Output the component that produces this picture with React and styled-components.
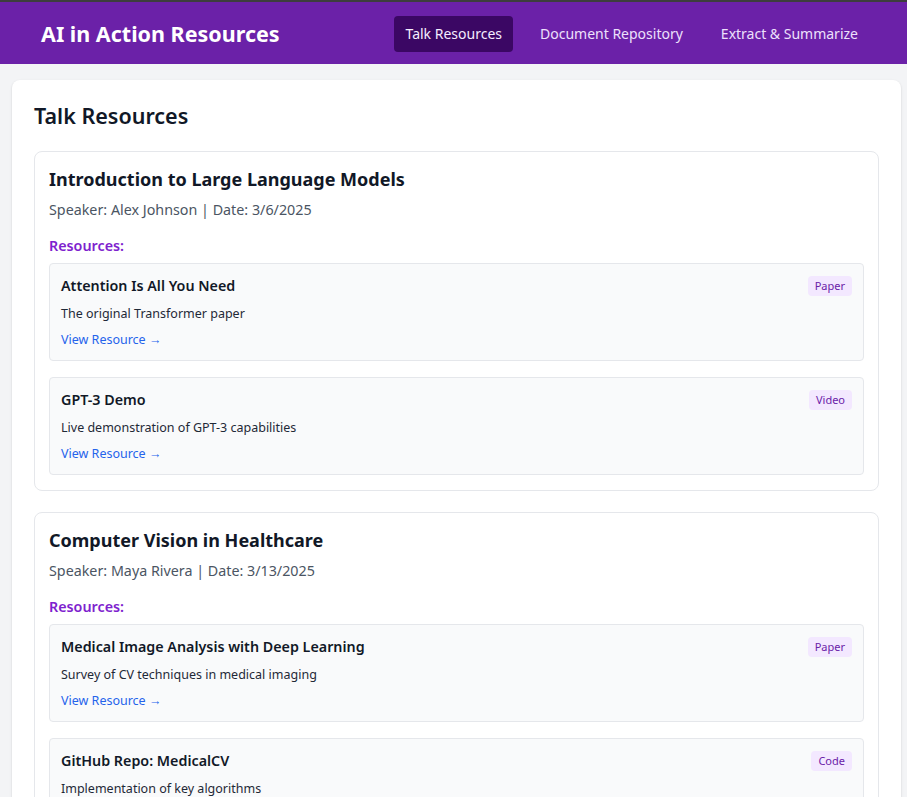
import React from 'react';
import styled, { createGlobalStyle } from 'styled-components';

const GlobalStyle = createGlobalStyle`
  html, body {
    margin: 0;
    padding: 0;
    background: #f3f4f6;
    font-family: "Noto Sans", "Liberation Sans", sans-serif;
    color: #111827;
  }
  * { box-sizing: border-box; }
`;

const Header = styled.header`
  display: flex;
  justify-content: space-between;
  align-items: center;
  height: 64px;
  padding: 1px 38px 0 41px;
  background: #6b21a8;
  border-top: 2px solid #3d3d3d;
`;

const Brand = styled.h1`
  margin: 0;
  font-size: 21.5px;
  font-weight: 700;
  color: #ffffff;
`;

const Nav = styled.nav`
  display: flex;
  gap: 16px;
`;

const NavButton = styled.button`
  border: none;
  border-radius: 4px;
  padding: 8px 11px;
  font-family: inherit;
  font-size: 14px;
  line-height: 20px;
  cursor: pointer;
  color: ${p => (p.$active ? '#f5edff' : '#ede0fc')};
  background: ${p => (p.$active ? '#3b0764' : 'transparent')};
`;

const Main = styled.main`
  padding: 16px 6px 0 12px;
`;

const Panel = styled.section`
  background: #ffffff;
  border-radius: 8px;
  box-shadow: 0 1px 3px rgba(0, 0, 0, 0.1), 0 1px 2px rgba(0, 0, 0, 0.06);
  padding: 20px 22px 22px;
`;

const PanelTitle = styled.h2`
  margin: 0 0 19px;
  font-size: 21.5px;
  line-height: 32px;
  font-weight: 600;
`;

const TalkCard = styled.article`
  border: 1px solid #e5e7eb;
  border-radius: 8px;
  padding: 13px 14px 15px;
  margin-bottom: 21px;
`;

const TalkTitle = styled.h3`
  margin: 0 0 5px;
  font-size: 18px;
  line-height: 28px;
  font-weight: 700;
`;

const Meta = styled.p`
  margin: 0 0 14px;
  font-size: 14.3px;
  line-height: 24px;
  color: #4b5563;
`;

const SectionLabel = styled.h4`
  margin: 0 0 7px;
  font-size: 14.3px;
  line-height: 20px;
  font-weight: 600;
  color: #7e22ce;
`;

const ResourceList = styled.div`
  display: flex;
  flex-direction: column;
  gap: 16px;
`;

const Resource = styled.div`
  background: #f9fafb;
  border: 1px solid #e5e7eb;
  border-radius: 4px;
  padding: 12px 11px 10px;
`;

const ResourceHead = styled.div`
  display: flex;
  justify-content: space-between;
  align-items: flex-start;
`;

const ResourceTitle = styled.h5`
  margin: 0;
  font-size: 14.3px;
  line-height: 20px;
  font-weight: 600;
`;

const Badge = styled.span`
  padding: 2px 7px;
  border-radius: 4px;
  font-size: 11px;
  line-height: 16px;
  background: #f3e8ff;
  color: #6b21a8;
`;

const Description = styled.p`
  margin: 8px 0 6px;
  font-size: 12.5px;
  line-height: 20px;
  color: #1f2937;
`;

const Link = styled.a`
  display: block;
  width: fit-content;
  font-size: 12.5px;
  line-height: 20px;
  color: #2563eb;
  text-decoration: none;
`;

const talks = [
  {
    title: 'Introduction to Large Language Models',
    speaker: 'Alex Johnson',
    date: '3/6/2025',
    resources: [
      { title: 'Attention Is All You Need', type: 'Paper', description: 'The original Transformer paper' },
      { title: 'GPT-3 Demo', type: 'Video', description: 'Live demonstration of GPT-3 capabilities' },
    ],
  },
  {
    title: 'Computer Vision in Healthcare',
    speaker: 'Maya Rivera',
    date: '3/13/2025',
    resources: [
      { title: 'Medical Image Analysis with Deep Learning', type: 'Paper', description: 'Survey of CV techniques in medical imaging' },
      { title: 'GitHub Repo: MedicalCV', type: 'Code', description: 'Implementation of key algorithms' },
    ],
  },
];

const navItems = ['Talk Resources', 'Document Repository', 'Extract & Summarize'];

export default function App() {
  return (
    <>
      <GlobalStyle />
      <Header>
        <Brand>AI in Action Resources</Brand>
        <Nav>
          {navItems.map((item, i) => (
            <NavButton key={item} $active={i === 0}>{item}</NavButton>
          ))}
        </Nav>
      </Header>
      <Main>
        <Panel>
          <PanelTitle>Talk Resources</PanelTitle>
          {talks.map(talk => (
            <TalkCard key={talk.title}>
              <TalkTitle>{talk.title}</TalkTitle>
              <Meta>Speaker: {talk.speaker} | Date: {talk.date}</Meta>
              <SectionLabel>Resources:</SectionLabel>
              <ResourceList>
                {talk.resources.map(res => (
                  <Resource key={res.title}>
                    <ResourceHead>
                      <ResourceTitle>{res.title}</ResourceTitle>
                      <Badge>{res.type}</Badge>
                    </ResourceHead>
                    <Description>{res.description}</Description>
                    <Link href="#">View Resource →</Link>
                  </Resource>
                ))}
              </ResourceList>
            </TalkCard>
          ))}
        </Panel>
      </Main>
    </>
  );
}
